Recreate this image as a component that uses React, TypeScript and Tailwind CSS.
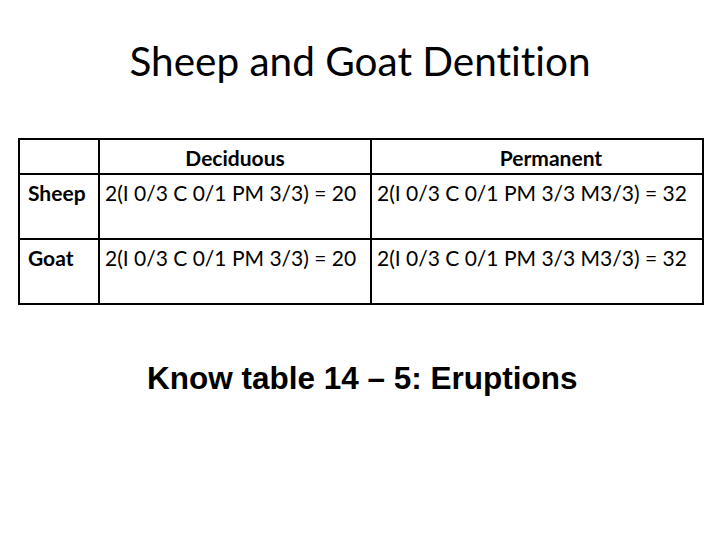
import React from 'react';

const rows = [
  { name: 'Sheep', deciduous: '2(I 0/3 C 0/1 PM 3/3) = 20', permanent: '2(I 0/3 C 0/1 PM 3/3 M3/3) = 32' },
  { name: 'Goat', deciduous: '2(I 0/3 C 0/1 PM 3/3) = 20', permanent: '2(I 0/3 C 0/1 PM 3/3 M3/3) = 32' },
];

export default function App() {
  return (
    <div className="w-[720px] h-[540px] bg-white text-black font-['Lato',_'Open_Sans',_sans-serif] [font-variant-ligatures:none] overflow-hidden">
      <h1 className="pt-[37px] h-[138px] text-center text-[40.5px] leading-[48px] font-normal">
        Sheep and Goat Dentition
      </h1>
      <div className="ml-[18px] w-[684px]">
        <table className="w-full border-collapse border-2 border-black table-fixed text-[21px] leading-[24px]">
          <colgroup>
            <col className="w-[80px]" />
            <col className="w-[272px]" />
            <col className="w-[332px]" />
          </colgroup>
          <thead>
            <tr className="h-[35px]">
              <th className="border-2 border-black" />
              <th className="border-2 border-black font-bold text-center pt-[2px]">Deciduous</th>
              <th className="border-2 border-black font-bold text-center pl-[28px] pt-[2px]">Permanent</th>
            </tr>
          </thead>
          <tbody>
            {rows.map((r) => (
              <tr key={r.name} className="h-[65px]">
                <td className="border-2 border-black align-top pl-[8px] pt-[6px] font-bold">{r.name}</td>
                <td className="border-2 border-black align-top px-[5px] pt-[6px] whitespace-nowrap">{r.deciduous}</td>
                <td className="border-2 border-black align-top px-[5px] pt-[6px] whitespace-nowrap">{r.permanent}</td>
              </tr>
            ))}
          </tbody>
        </table>
      </div>
      <p className="mt-[56px] ml-[147px] font-['Liberation_Sans',_Arial,_sans-serif] font-bold text-[31.5px] leading-[34px]">
        Know table 14 – 5: Eruptions
      </p>
    </div>
  );
}
